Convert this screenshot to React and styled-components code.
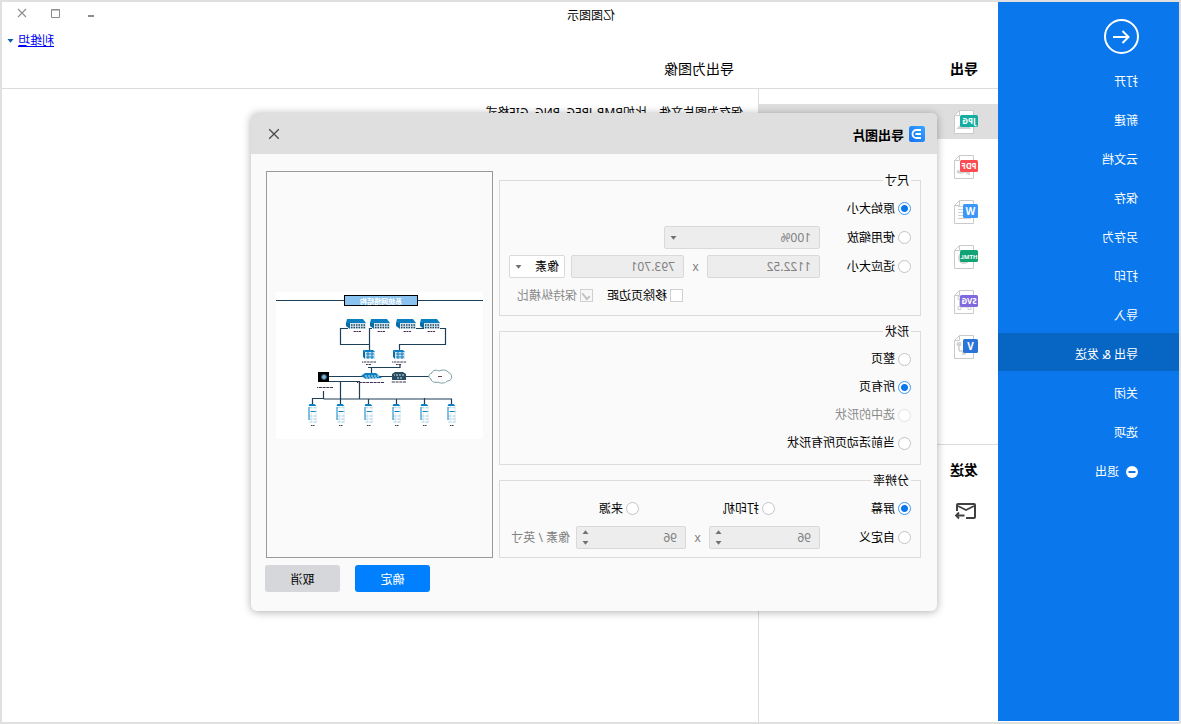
import React from "react";
import styled, { createGlobalStyle, css } from "styled-components";

const GlobalStyle = createGlobalStyle`
  *, *::before, *::after { box-sizing: border-box; }
  body { margin: 0; background: #fff; }
  body, button, input, select {
    font-family: "Noto Sans", "Noto Sans CJK SC", sans-serif;
    font-size: 12px;
    color: #000;
  }
`;

/* The whole window is shown flipped left to right. */
const Window = styled.div`
  display: flex;
  min-height: 100vh;
  border: 2px solid #e0e0e0;
  background: #fff;
  line-height: 18px;
  transform: scaleX(-1);
`;

const Sidebar = styled.nav`
  flex: 0 0 181px;
  display: flex;
  flex-direction: column;
  margin-bottom: 1px;
  padding-top: 17px;
  background: #0a78ec;
`;

const BackButton = styled.button`
  display: flex;
  width: 35px;
  height: 35px;
  margin: 0 0 6px 40px;
  padding: 0;
  border: 0;
  background: none;
`;

const NavItem = styled.a`
  display: flex;
  align-items: center;
  gap: 7px;
  height: 38px;
  margin-bottom: 1px;
  padding: 6px 0 0 41px;
  color: #fff;
  text-decoration: none;
  background: ${(p) => (p.$active ? "#0765c4" : "transparent")};
`;

const Main = styled.div`
  flex: 1;
  min-width: 0;
  display: flex;
  flex-direction: column;
`;

const Header = styled.header`
  display: grid;
  grid-template-columns: 240px 1fr;
  grid-template-rows: 26px 26px 34px;
  border-bottom: 1px solid #dcdcdc;
`;

const AppTitle = styled.div`
  grid-column: 1 / -1;
  grid-row: 1;
  padding-left: 383px;
  line-height: 27px;
`;

const WindowButtons = styled.div`
  grid-column: 1 / -1;
  grid-row: 1;
  justify-self: end;
  display: flex;
  gap: 23px;
  margin: 6px 13px 0 0;
`;

const WindowButton = styled.button`
  display: flex;
  width: 12px;
  height: 12px;
  padding: 0;
  border: 0;
  background: none;
`;

const Account = styled.a`
  grid-column: 1 / -1;
  grid-row: 2;
  justify-self: end;
  display: flex;
  align-items: center;
  gap: 4px;
  margin-right: 5px;
  color: #0000f0;
`;

const Heading = styled.h2`
  margin: 0;
  padding-left: ${(p) => (p.$main ? 24 : 20)}px;
  font-size: 14px;
  font-weight: ${(p) => (p.$main ? 400 : 700)};
  line-height: 30px;
`;

const Content = styled.div`
  flex: 1;
  display: flex;
`;

const ExportColumn = styled.div`
  flex: 0 0 240px;
  padding-top: 15px;
  border-right: 1px solid #dcdcdc;
`;

const FormatList = styled.div`
  display: flex;
  flex-direction: column;
  gap: 10px;
  padding-bottom: 80px;
  border-bottom: 1px solid #dcdcdc;
`;

const FormatButton = styled.button`
  display: flex;
  align-items: center;
  height: 35px;
  padding: 0 0 0 20px;
  border: 0;
  background: ${(p) => (p.$active ? "#dedede" : "transparent")};
`;

const SendBlock = styled.section`
  padding-top: 10px;
`;

const MailButton = styled.button`
  display: flex;
  margin: 17px 0 0 21px;
  padding: 0;
  border: 0;
  background: none;
`;

const Description = styled.p`
  margin: 0;
  padding: 15px 15px;
`;

const Overlay = styled.div`
  position: absolute;
  inset: 0;
  display: flex;
  align-items: center;
  justify-content: center;
  padding-right: 7px;
`;

const Dialog = styled.section`
  width: 686px;
  border-radius: 6px;
  background: #fafafa;
  box-shadow: 0 1px 8px rgba(0, 0, 0, 0.32);
  overflow: hidden;
`;

const DialogBar = styled.header`
  display: flex;
  align-items: center;
  height: 41px;
  padding: 0 17px 0 12px;
  background: #dfdfdf;
`;

const DialogTitle = styled.h1`
  flex: 1;
  margin: 2px 0 0 5px;
  font-size: 13px;
  font-weight: 700;
`;

const DialogBody = styled.div`
  display: flex;
  gap: 6px;
  padding: 17px 15px 7px 16px;
`;

const Options = styled.form`
  flex: 1;
  display: flex;
  flex-direction: column;
  gap: 7px;
  padding-top: 1px;
`;

const Group = styled.fieldset`
  display: flex;
  flex-direction: column;
  gap: ${(p) => (p.$list ? 10 : 6)}px;
  margin: 0;
  padding: ${(p) => (p.$list ? "10px 9px 12px" : "8px 9px")};
  border: 1px solid #dcdcdc;
`;

const Legend = styled.legend`
  padding: 0 2px;
  line-height: 17px;
`;

const Row = styled.div`
  display: flex;
  align-items: center;
  height: ${(p) => (p.$list ? 18 : 23)}px;
  padding-left: ${(p) => (p.$inset ? 228 : 0)}px;
`;

const Choice = styled.label`
  flex: 0 0 ${(p) => p.$width || "auto"};
  display: flex;
  align-items: center;
  gap: 3px;
  margin-right: ${(p) => (p.$spaced ? 14 : 0)}px;
  white-space: nowrap;
  color: ${(p) => (p.$disabled ? "#8a8a8a" : "#000")};
`;

const Radio = styled.input.attrs({ type: "radio" })`
  appearance: none;
  width: 13px;
  height: 13px;
  margin: 0;
  border: 1px solid #c4c4c4;
  border-radius: 50%;
  background: #fff;
  &:checked {
    border-color: #3f95f0;
    background: radial-gradient(circle, #0a78ec 0 3px, #fff 4px);
  }
  &:disabled { border-color: #e2e2e2; }
`;

const Check = styled.input.attrs({ type: "checkbox" })`
  appearance: none;
  display: grid;
  place-items: center;
  width: 13px;
  height: 13px;
  margin: 0;
  border: 1px solid #cfcfd2;
  background: #fff;
  &:disabled { background: #f7f7f7; }
  &:checked::before {
    content: "";
    width: 8px;
    height: 5px;
    border: solid #c2c2c2;
    border-width: 0 0 2px 2px;
    transform: rotate(-50deg);
  }
`;

const fieldBox = css`
  height: 23px;
  border: 1px solid #d9d9dc;
  border-radius: 2px;
  background: #ededed;
  color: #808080;
`;

const Field = styled.input`
  ${fieldBox}
  width: 113px;
  padding: 0 8px;
`;

const SelectBox = styled.div`
  ${fieldBox}
  display: flex;
  align-items: center;
  width: ${(p) => p.$width};
  padding-right: 5px;
  ${(p) => p.$enabled && "margin-left: 6px; background: #fff; color: #000;"}
`;

const Select = styled.select`
  appearance: none;
  flex: 1;
  min-width: 0;
  height: 21px;
  padding: 0 0 0 ${(p) => p.$pad};
  border: 0;
  background: transparent;
  color: inherit;
  opacity: 1;
`;

const Times = styled.span`
  width: 23px;
  text-align: center;
  color: #808080;
`;

const SpinBox = styled.div`
  ${fieldBox}
  display: flex;
  width: ${(p) => p.$width};
`;

const SpinInput = styled.input.attrs({ type: "number" })`
  appearance: textfield;
  flex: 1;
  min-width: 0;
  padding: 0 0 0 8px;
  border: 0;
  background: transparent;
  color: inherit;
  &::-webkit-inner-spin-button { appearance: none; margin: 0; }
`;

const SpinArrows = styled.div`
  display: flex;
  flex-direction: column;
  justify-content: space-between;
  padding: 3px 5px 3px 0;
`;

const SpinButton = styled.button`
  display: flex;
  padding: 0;
  border: 0;
  background: none;
`;

const Unit = styled.span`
  margin-left: 6px;
  color: #808080;
  white-space: nowrap;
`;

const Preview = styled.div`
  flex: 0 0 227px;
  display: flex;
  align-items: center;
  justify-content: center;
  padding-top: 2px;
  border: 1px solid #999;
`;

const Actions = styled.footer`
  display: flex;
  justify-content: flex-end;
  gap: 15px;
  padding: 0 14px 19px;
`;

const ActionButton = styled.button`
  width: 75px;
  height: 27px;
  padding: 0;
  border: 0;
  border-radius: 3px;
  background: ${(p) => (p.$primary ? "#0080ff" : "#d5d7db")};
  color: ${(p) => (p.$primary ? "#fff" : "#000")};
`;

const Caret = ({ up, color = "#707070" }) => (
  <svg width="7" height="4" viewBox="0 0 7 4" aria-hidden="true">
    <path d={up ? "M.5 4 3.5 .2 6.5 4Z" : "M.5 0 3.5 3.8 6.5 0Z"} fill={color} />
  </svg>
);

const CloseIcon = ({ size, color }) => (
  <svg width={size} height={size} viewBox="0 0 12 12" stroke={color} strokeWidth="1.3" aria-hidden="true">
    <path d="M1.2 1.2 10.8 10.8M10.8 1.2 1.2 10.8" />
  </svg>
);

const formatArt = {
  JPG: <path d="M7 20l5-9 4 6 1-2 5 5z" fill="#d3d3d3" />,
  PDF: <path d="M8 20c4-1 7-6 7-9M12 15c2 4 6 4 9 2" stroke="#d3d3d3" strokeWidth="3" fill="none" />,
  W: <path d="M7 7.5h13M7 10.5h13M7 13.5h13M7 16.5h13M7 19.5h13" stroke="#d0d0d0" fill="none" />,
  HTML: <circle cx="14" cy="14" r="6" fill="#d3d3d3" />,
  SVG: <path d="M8.5 9v9h10V9zM7 7.5h3v3H7zM17 7.5h3v3h-3zM7 17.500h3v3H7zM17 17.500h3v3h-3z" stroke="#d0d0d0" fill="#fff" />,
  V: <path d="M19 10v7M17.500 9h3v2h-3zM19 17h-4v3h-3" stroke="#cfcfcf" strokeWidth="1.500" fill="none" />,
};

const FormatIcon = ({ name, color }) => {
  const short = name.length === 1;
  return (
    <svg width="25" height="25" viewBox="0 0 25 25" role="img" aria-label={name}>
      <path d="M4.500 1.500H18.500L23.500 6.500V24.500H4.500Z" fill="#fff" stroke="#cacaca" />
      {formatArt[name]}
      <path d="M18.500 1.500V6.500H23.500" fill="none" stroke="#cacaca" />
      <rect x="0" y={short ? 5 : 6} width={short ? 15 : 18} height={short ? 14 : 12} rx="1.500" fill={color} />
      <text
        x={short ? 7.5 : 9}
        y={short ? 15.5 : 15}
        fill="#fff"
        fontSize={short ? 10 : name.length === 4 ? 6 : 8}
        fontWeight="700"
        textAnchor="middle"
      >
        {name}
      </text>
    </svg>
  );
};

const Logo = () => (
  <svg width="16" height="16" viewBox="0 0 16 16" aria-hidden="true">
    <defs>
      <linearGradient id="logo" x1="0" y1="0" x2="1" y2="1">
        <stop offset="0" stopColor="#35a6ff" />
        <stop offset="1" stopColor="#1670f5" />
      </linearGradient>
    </defs>
    <rect width="16" height="16" rx="2.500" fill="url(#logo)" />
    <path d="M4 4H8.500A4 4 0 0 1 8.500 12H4M4 8H9.500" fill="none" stroke="#fff" strokeWidth="1.800" />
  </svg>
);

const Switch = ({ x, y }) => (
  <g transform={`translate(${x} ${y})`}>
    <path d="M0 4 3 0H19L20 4Z" fill="#0c7fc0" />
    <path d="M0 4H16V10H0Z" fill="#d3e6f0" />
    <path d="M16 4H20V7L16 10Z" fill="#0b6ba6" />
    <path d="M1 6H15M1 8.500H15" stroke="#24475e" strokeWidth="1.400" strokeDasharray="1.500 1" />
    <path d="M5 12.500H13" stroke="#3a2a50" strokeWidth="1.200" strokeDasharray="2 .6" />
  </g>
);

const Router = ({ x }) => (
  <g transform={`translate(${x} 58)`}>
    <path d="M0 2 2 0H12L10 2Z" fill="#0c7fc0" />
    <path d="M0 2H10V9H0Z" fill="#cfe4f0" />
    <path d="M10 2 12 0V7L10 9Z" fill="#0b6ba6" />
    <path d="M1 4H9M1 7H9M3 2V9M7 2V9" stroke="#0c7fc0" />
    <path d="M-1 12H13M4 14.500H9" stroke="#3a3050" strokeDasharray="2.500 .7" />
  </g>
);

const Server = ({ x }) => (
  <g transform={`translate(${x} 112)`}>
    <path d="M-4 2-2 0H3L4 2Z" fill="#0c7fc0" />
    <path d="M-4 3.500H3M-4 12H3M-4 15H3M-4 18H3" stroke="#bcd9e9" strokeWidth="1.500" strokeDasharray="3 1" />
    <path d="M-4 7.500H2" stroke="#0c7fc0" />
    <path d="M3.500 3V16" stroke="#0c7fc0" />
    <path d="M-3.500 3V19M1 9V19" stroke="#d5e8f2" />
    <path d="M-2 21.500H2" stroke="#4a3350" strokeDasharray="1.500 .5" />
  </g>
);

const Diagram = () => (
  <svg width="207" height="147" viewBox="0 0 207 147" role="img" aria-label="系统网络结构">
    <rect width="207" height="147" fill="#fff" />
    <g fill="none" stroke="#1d3f57" strokeWidth="1.200">
      <path d="M0 8.500H207" />
      <path d="M77 36.500H37.500V52.500H83.500V58M135 36.500H142.500V52.500H113.500M111 36.500H113.500V58" />
      <path d="M83 73V75.500H115M111.500 75.500V82M54 84.500H154" />
      <path d="M155 89.500H123.500V107M142.500 89.500V107M159.500 99V107" />
      <path d="M31.500 112V107H159.500M159.500 106.500H170.500V112M142.500 107V112M114.500 107V112M86.500 107V112M58.500 106V112" />
    </g>
    <rect x="65.500" y="3.500" width="73" height="10" fill="#8ac3ef" stroke="#000" />
    <text x="102" y="11.500" fill="#fff" fontSize="7" fontWeight="700" textAnchor="middle">系统网络结构</text>
    <Switch x={43} y={27} />
    <Switch x={67} y={27} />
    <Switch x={93} y={27} />
    <Switch x={117} y={27} />
    <Router x={78} />
    <Router x={108} />
    <path d="M101 86 107 81H118L122 84 117 87Z" fill="#0c7fc0" />
    <path d="M104 84H119M106 86H117" stroke="#d3e6f0" strokeDasharray="2 1" />
    <path d="M99 90.500H126M77 90H92M150 95.500H166" stroke="#3a3050" strokeDasharray="3 .7" />
    <path d="M77 82 80 80H88L91 82V88H77Z" fill="#274b60" />
    <path d="M79 83H89M81 86H87" stroke="#cfe4f0" strokeDasharray="2 1" />
    <path d="M35 80C37 77 42 78 44 79 48 77 51 79 51 81 55 82 55 86 52 87 52 90 47 91 45 90 42 92 37 91 36 89 30 89 30 82 35 80Z" fill="#fff" stroke="#7b9da5" />
    <path d="M41 84.500H45" stroke="#694050" />
    <rect x="154" y="80" width="11" height="10" fill="#000" />
    <circle cx="159" cy="85" r="2.500" fill="#7fb6d8" stroke="#2c5a75" />
    {[31.5, 58.5, 86.5, 114.5, 142.5, 170.5].map((x) => (
      <Server key={x} x={x} />
    ))}
  </svg>
);

const navItems = ["打开", "新建", "云文档", "保存", "另存为", "打印", "导入", "导出 & 发送", "关闭", "选项"];

const formats = [
  ["JPG", "#14ada0"],
  ["PDF", "#fb4c52"],
  ["W", "#3c97fb"],
  ["HTML", "#12a375"],
  ["SVG", "#8068df"],
  ["V", "#2b74d7"],
];

const shapeChoices = [
  { text: "整页" },
  { text: "所有页", checked: true },
  { text: "选中的形状", disabled: true },
  { text: "当前活动页所有形状" },
];

const RadioChoice = ({ group, text, checked, disabled, width }) => (
  <Choice $width={width} $disabled={disabled}>
    <Radio name={group} defaultChecked={checked} disabled={disabled} />
    {text}
  </Choice>
);

const Spin = ({ label, width }) => (
  <SpinBox $width={width}>
    <SpinInput aria-label={label} defaultValue="96" disabled />
    <SpinArrows>
      <SpinButton type="button" aria-label="增加" disabled><Caret up /></SpinButton>
      <SpinButton type="button" aria-label="减少" disabled><Caret /></SpinButton>
    </SpinArrows>
  </SpinBox>
);

export default function App() {
  return (
    <>
      <GlobalStyle />
      <Window>
        <Sidebar>
          <BackButton aria-label="返回">
            <svg width="35" height="35" viewBox="0 0 35 35" fill="none" stroke="#fff" strokeWidth="2">
              <circle cx="17.500" cy="17.500" r="16.500" />
              <path d="M26 18H11M16.500 12 10.500 18 16.500 24" />
            </svg>
          </BackButton>
          {navItems.map((text) => (
            <NavItem key={text} href="#" $active={text.includes("&")}>{text}</NavItem>
          ))}
          <NavItem href="#">
            <svg width="12" height="12" viewBox="0 0 12 12" aria-hidden="true">
              <circle cx="6" cy="6" r="6" fill="#fff" />
              <path d="M2.500 6H9.500" stroke="#0a78ec" strokeWidth="2" />
            </svg>
            退出
          </NavItem>
        </Sidebar>

        <Main>
          <Header>
            <AppTitle>亿图图示</AppTitle>
            <WindowButtons>
              <WindowButton aria-label="最小化">
                <svg width="12" height="12"><path d="M3 8H9" stroke="#8c8c8c" strokeWidth="2" /></svg>
              </WindowButton>
              <WindowButton aria-label="最大化">
                <svg width="12" height="12" fill="none" stroke="#8c8c8c">
                  <path d="M2.500 1.500H10.500V9.500H2.500ZM2.500 2H10.500" />
                </svg>
              </WindowButton>
              <WindowButton aria-label="关闭"><CloseIcon size="10" color="#8c8c8c" /></WindowButton>
            </WindowButtons>
            <Account href="#">利维坦<Caret color="#0b5cb0" /></Account>
            <Heading>导出</Heading>
            <Heading $main>导出为图像</Heading>
          </Header>
          <Content>
            <ExportColumn>
              <FormatList>
                {formats.map(([name, color], i) => (
                  <FormatButton key={name} $active={i === 0}>
                    <FormatIcon name={name} color={color} />
                  </FormatButton>
                ))}
              </FormatList>
              <SendBlock>
                <Heading>发送</Heading>
                <MailButton aria-label="发送邮件">
                  <svg width="22" height="18" viewBox="0 0 22 18" fill="none" stroke="#404040" strokeWidth="2">
                    <path d="M11 16H3Q2 16 2 15V3Q2 2 3 2H19Q20 2 20 3V9" />
                    <path d="M3 4 11 8 19 4" strokeWidth="1.700" />
                    <path d="M12.500 13.500H20.500M18 10.500 21 13.500 18 16.500" strokeWidth="1.800" />
                  </svg>
                </MailButton>
              </SendBlock>
            </ExportColumn>
            <Description>保存为图片文件，比如BMP, JPEG, PNG, GIF格式</Description>
          </Content>
        </Main>

        <Overlay>
          <Dialog role="dialog" aria-labelledby="dialog-title">
            <DialogBar>
              <Logo />
              <DialogTitle id="dialog-title">导出图片</DialogTitle>
              <WindowButton aria-label="关闭"><CloseIcon size="12" color="#4a4a4a" /></WindowButton>
            </DialogBar>
            <DialogBody>
              <Options>
                <Group>
                  <Legend>尺寸</Legend>
                  <Row><RadioChoice group="size" text="原始大小" checked /></Row>
                  <Row>
                    <RadioChoice group="size" text="使用缩放" width="91px" />
                    <SelectBox $width="156px">
                      <Select aria-label="缩放" $pad="8px" disabled><option>100%</option></Select>
                      <Caret />
                    </SelectBox>
                  </Row>
                  <Row>
                    <RadioChoice group="size" text="适应大小" width="91px" />
                    <Field aria-label="宽度" defaultValue="1122.52" disabled />
                    <Times>x</Times>
                    <Field aria-label="高度" defaultValue="793.701" disabled />
                    <SelectBox $width="56px" $enabled>
                      <Select aria-label="单位" $pad="5px"><option>像素</option></Select>
                      <Caret />
                    </SelectBox>
                  </Row>
                  <Row $inset>
                    <Choice $spaced><Check />移除页边距</Choice>
                    <Choice $disabled><Check defaultChecked disabled />保持纵横比</Choice>
                  </Row>
                </Group>
                <Group $list>
                  <Legend>形状</Legend>
                  {shapeChoices.map((choice) => (
                    <Row $list key={choice.text}><RadioChoice group="shape" {...choice} /></Row>
                  ))}
                </Group>
                <Group>
                  <Legend>分辨率</Legend>
                  <Row>
                    <RadioChoice group="dpi" text="屏幕" width="136px" checked />
                    <RadioChoice group="dpi" text="打印机" width="136px" />
                    <RadioChoice group="dpi" text="来源" />
                  </Row>
                  <Row>
                    <RadioChoice group="dpi" text="自定义" width="91px" />
                    <Spin label="水平分辨率" width="111px" />
                    <Times>x</Times>
                    <Spin label="垂直分辨率" width="110px" />
                    <Unit>像素 / 英寸</Unit>
                  </Row>
                </Group>
              </Options>
              <Preview><Diagram /></Preview>
            </DialogBody>
            <Actions>
              <ActionButton $primary>确定</ActionButton>
              <ActionButton>取消</ActionButton>
            </Actions>
          </Dialog>
        </Overlay>
      </Window>
    </>
  );
}
